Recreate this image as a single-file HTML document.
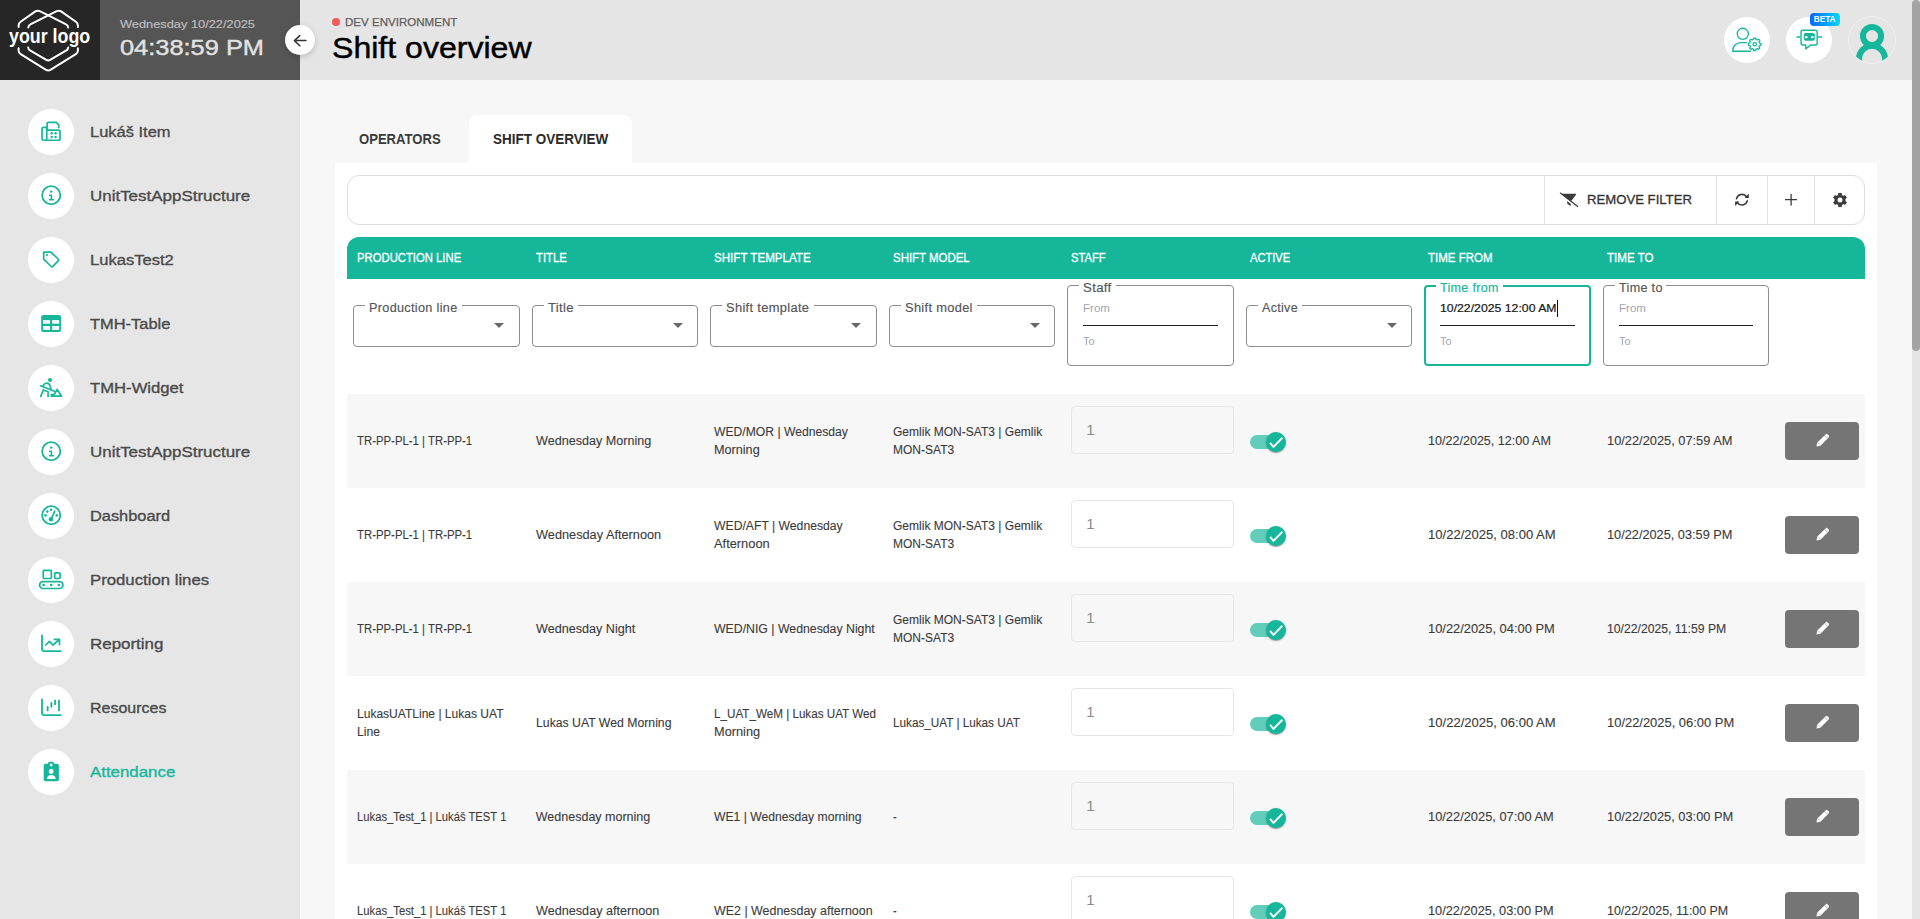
<!DOCTYPE html>
<html lang="en">
<head>
<meta charset="utf-8">
<title>Shift overview</title>
<style>
*{box-sizing:border-box;margin:0;padding:0}
html,body{width:1920px;height:919px;overflow:hidden;background:#f7f7f7;font-family:"Liberation Sans",sans-serif;color:#333}
.abs{position:absolute}
.t{position:absolute;white-space:nowrap;transform-origin:0 50%}
#logo{left:0;top:0;width:100px;height:80px;background:#262626}
#clock{left:100px;top:0;width:200px;height:80px;background:#555}
#topbar{left:300px;top:0;width:1612px;height:80px;background:#e5e5e5}
#side{left:0;top:80px;width:300px;height:839px;background:#e6e6e6}
#sbar{left:1912px;top:0;width:8px;height:919px;background:#e5e5e5}
#sthumb{left:1912px;top:0;width:8px;height:351px;background:#a3a3a3;border-radius:4px}
#collapse{left:285px;top:25px;width:30px;height:30px;border-radius:50%;background:#fff;box-shadow:0 2px 6px rgba(0,0,0,.18)}
.mi{position:absolute;left:28px;width:46px;height:46px;border-radius:50%;background:#fff}
.mi svg{position:absolute;left:11px;top:11px;width:24px;height:24px;overflow:visible}
.hc{position:absolute;top:17px;width:46px;height:46px;border-radius:50%;background:#fff}
#card{left:335px;top:163px;width:1542px;height:760px;background:#fff}
#tab2{left:469px;top:115px;width:163px;height:50px;background:#fff;border-radius:9px 9px 0 0}
#tool{left:347px;top:175px;width:1518px;height:50px;border:1px solid #dedede;border-radius:12px;background:#fff}
.sep{position:absolute;top:176px;width:1px;height:48px;background:#e2e2e2}
#thead{left:347px;top:237px;width:1518px;height:42px;background:#16b69b;border-radius:12px 12px 0 0}
.row{position:absolute;left:347px;width:1518px;height:94px}
.row.g{background:#f7f7f7}
.fb{position:absolute;border:1px solid #8c8c8c;border-radius:4px;background:#fff}
.fb.sel{top:305px;height:42px;width:167px}
.fb.rng{top:285px;height:81px;width:167px}
.fb.foc{border:2px solid #16b69b}
.lg{position:absolute;height:4px;background:#fff}
.ln{position:absolute;top:325px;height:1px;background:#222}
.arr{position:absolute;top:323px;width:0;height:0;border-left:5px solid transparent;border-right:5px solid transparent;border-top:5px solid #686868}
.inp{position:absolute;left:1071px;width:163px;height:48px;border:1px solid #e6e6e6;border-radius:4px;background:#fff}
.inp.d{background:#f7f7f7}
.trk{position:absolute;left:1250px;width:34px;height:14px;border-radius:7px;background:#62cdb9}
.knb{position:absolute;left:1266px;width:20px;height:20px;border-radius:50%;background:#16b69b;box-shadow:0 2px 1px -1px rgba(0,0,0,.2),0 1px 1px rgba(0,0,0,.14),0 1px 3px rgba(0,0,0,.12)}
.knb svg{position:absolute;left:0;top:0;width:20px;height:20px}
.eb{position:absolute;left:1785px;width:74px;height:38px;border-radius:4px;background:#757575}
.eb svg{position:absolute;left:30.6px;top:11.2px;width:14px;height:14px}
</style>
</head>
<body>
<header>
<div id="logo" class="abs"></div>
<div id="clock" class="abs"></div>
<div id="topbar" class="abs"></div>
<svg class="abs" style="left:0;top:0" width="100" height="80" viewBox="0 0 100 80" fill="none" stroke="#fff" stroke-width="2" stroke-linecap="round" stroke-linejoin="round"><path d="M18.6 27V25.6Q18.6 23.2 20.6 21.8L35.4 11.4Q37.6 10 39.8 11.2L65.6 24.2Q68.2 25.5 68.2 27.4"/><path d="M77.9 27V25.6Q77.9 23.2 75.9 21.8L61.1 11.4Q58.9 10 56.7 11.2L30.9 24.2Q28.3 25.5 28.3 27.4"/><path d="M18.6 48.2V50.4Q18.6 52.8 20.7 54.1L46 69.8Q48.2 71.1 50.4 69.8L75.8 54.1Q77.9 52.8 77.9 50.4V48.2"/><path d="M28.2 47.6Q28.4 49.4 30 50.3L46.3 59.9Q48.2 61 50.1 59.9L66.4 50.3Q68 49.4 68.2 47.6"/></svg>
<div class="abs" style="left:332px;top:17.8px;width:8.2px;height:8.2px;border-radius:50%;background:#f35b5b"></div>
<div class="hc" style="left:1724px"><svg width="46" height="46" viewBox="0 0 46 46" fill="none" stroke="#16b69b" stroke-width="1.3" stroke-linecap="round" stroke-linejoin="round" style="position:absolute;left:0;top:0"><circle cx="18.8" cy="16.8" r="5.55"/><path d="M22.6 25.7H16.6C11.6 25.7 8.7 29.6 8.7 34.25H26.6"/><path d="M29.52 22.42L29.74 21.00L31.72 21.00L31.94 22.42L33.31 22.99L34.46 22.13L35.87 23.54L35.01 24.69L35.58 26.06L37.00 26.28L37.00 28.26L35.58 28.48L35.01 29.85L35.87 31.00L34.46 32.41L33.31 31.55L31.94 32.12L31.72 33.54L29.74 33.54L29.52 32.12L28.15 31.55L27.00 32.41L25.59 31.00L26.45 29.85L25.88 28.48L24.46 28.26L24.46 26.28L25.88 26.06L26.45 24.69L25.59 23.54L27.00 22.13L28.15 22.99Z" stroke-width="1.25" fill="#fff"/><circle cx="30.73" cy="27.27" r="1.7" stroke-width="1.2"/></svg></div>
<div class="hc" style="left:1786px"><svg width="46" height="46" viewBox="0 0 46 46" fill="none" stroke="#16b69b" stroke-width="1.4" stroke-linecap="round" stroke-linejoin="round" style="position:absolute;left:0;top:0"><path d="M17 13.2H29.2Q31.15 13.2 31.15 15.2V26.1Q31.15 28.05 29.2 28.05H24.6L19.8 31.9V28.05H17Q15.05 28.05 15.05 26.1V15.2Q15.05 13.2 17 13.2Z"/><path d="M11 20H13.7M32.5 20H35.4" stroke-width="1.6"/><rect x="17.75" y="16.05" width="11.05" height="7.75" rx="1.8" fill="#16b69b" stroke="none"/><rect x="18.9" y="19.05" width="2.65" height="2.1" fill="#fff" stroke="none"/><rect x="25" y="19.05" width="2.65" height="2.1" fill="#fff" stroke="none"/></svg></div>
<div class="abs" style="left:1810px;top:12.6px;width:30.2px;height:13.3px;border-radius:4px;background:linear-gradient(90deg,#0a64ff 0%,#00a6ff 55%,#00d8ff 100%)"></div>
<div class="abs" style="left:1848px;top:16px;width:48px;height:48px;border-radius:50%;border:1px solid #efefef;overflow:hidden"><svg width="48" height="48" viewBox="0 0 48 48" style="position:absolute;left:-1px;top:-1px" fill="none" stroke="#16b69b"><circle cx="24.03" cy="20.1" r="9.06" stroke-width="6.04"/><circle cx="24" cy="42.8" r="13" stroke-width="6"/></svg></div>
<div class="t" style="left:120.3px;top:16.88px;font-size:11.3px;line-height:14px;font-weight:normal;color:#bdbdbd;-webkit-text-stroke:0.2px #bdbdbd;transform:scaleX(1.1331);">Wednesday 10/22/2025</div>
<div class="t" style="left:119.5px;top:35.38px;font-size:22px;line-height:26px;font-weight:normal;color:#e2e2e2;-webkit-text-stroke:0.4px #e2e2e2;transform:scaleX(1.1543);">04:38:59 PM</div>
<div class="t" style="left:345.0px;top:15.02px;font-size:11.5px;line-height:14px;font-weight:normal;color:#606060;-webkit-text-stroke:0.25px #606060;transform:scaleX(1.0042);">DEV ENVIRONMENT</div>
<div class="t" style="left:332.3px;top:29.78px;font-size:29.5px;line-height:35px;font-weight:normal;color:#000;-webkit-text-stroke:0.45px #000;transform:scaleX(1.0869);">Shift overview</div>
<div class="t" style="left:1813.8px;top:14.86px;font-size:8.2px;line-height:10px;font-weight:bold;color:#fff;">BETA</div>
<div class="t" style="left:8.6px;top:24.27px;font-size:20px;line-height:24px;font-weight:bold;color:#fff;transform:scaleX(0.8912);">your logo</div>
</header>
<nav>
<div id="side" class="abs"></div>
<div class="mi" style="top:109px"><svg viewBox="0 0 24 24" fill="none" stroke="#16b69b" stroke-width="1.7" stroke-linecap="round" stroke-linejoin="round"><rect x="3.05" y="7.35" width="4.7" height="12.9" rx="1.5"/><path d="M7.75 10.05H19.3Q21.05 10.05 21.05 11.8V18.5Q21.05 20.25 19.3 20.25H7.75"/><path d="M8.1 9.6V4Q8.1 2.3 9.8 2.3H17.2L19.8 4.9V7.6"/><circle cx="12.7" cy="13.2" r="1.2" fill="#16b69b" stroke="none"/><circle cx="16.6" cy="13.2" r="1.2" fill="#16b69b" stroke="none"/><circle cx="12.7" cy="17" r="1.2" fill="#16b69b" stroke="none"/><circle cx="16.6" cy="17" r="1.2" fill="#16b69b" stroke="none"/></svg></div>
<div class="mi" style="top:173px"><svg viewBox="0 0 24 24" fill="none" stroke="#16b69b" stroke-width="1.7" stroke-linecap="round" stroke-linejoin="round"><circle cx="12.2" cy="11.3" r="9.1" stroke-width="1.8"/><circle cx="12.1" cy="7.6" r="1.2" fill="#16b69b" stroke="none"/><path d="M10 11.3H12.4V15.6M9.9 15.7H14.9" stroke-width="1.6" stroke-linecap="butt"/></svg></div>
<div class="mi" style="top:237px"><svg viewBox="0 0 24 24" fill="none" stroke="#16b69b" stroke-width="1.7" stroke-linecap="round" stroke-linejoin="round"><path d="M4.7 4.1H11.8L19.2 11Q20.1 11.85 19.3 12.7L13.9 18.4Q13.05 19.3 12.15 18.5L4.7 11.2Z"/><circle cx="8" cy="7" r="1.1" fill="#16b69b" stroke="none"/></svg></div>
<div class="mi" style="top:301px"><svg viewBox="0 0 24 24" fill="none" stroke="#16b69b" stroke-width="1.7" stroke-linecap="round" stroke-linejoin="round"><rect x="2.2" y="2.9" width="19.75" height="17.1" rx="1.9" fill="#16b69b" stroke="none"/><rect x="4.06" y="8.1" width="7" height="3.6" fill="#fff" stroke="none"/><rect x="13.1" y="8.1" width="7.1" height="3.6" fill="#fff" stroke="none"/><rect x="4.06" y="14" width="7" height="3.9" fill="#fff" stroke="none"/><rect x="13.1" y="14" width="7.1" height="3.9" fill="#fff" stroke="none"/></svg></div>
<div class="mi" style="top:365px"><svg viewBox="0 0 24 24" fill="none" stroke="#16b69b" stroke-width="1.7" stroke-linecap="round" stroke-linejoin="round"><circle cx="11.05" cy="4" r="2.1" fill="#16b69b" stroke="none"/><path d="M4 10.3C4.6 7 9.6 5.6 10.9 9.6L12 13.3"/><path d="M1.6 9.8L15.4 15.3"/><path d="M1.7 20.4L4.3 14L9.1 15.8V20.4"/><path d="M18.2 13.5L22.6 20.2H12.3V18.5H15.2Z"/></svg></div>
<div class="mi" style="top:429px"><svg viewBox="0 0 24 24" fill="none" stroke="#16b69b" stroke-width="1.7" stroke-linecap="round" stroke-linejoin="round"><circle cx="12.2" cy="11.3" r="9.1" stroke-width="1.8"/><circle cx="12.1" cy="7.6" r="1.2" fill="#16b69b" stroke="none"/><path d="M10 11.3H12.4V15.6M9.9 15.7H14.9" stroke-width="1.6" stroke-linecap="butt"/></svg></div>
<div class="mi" style="top:493px"><svg viewBox="0 0 24 24" fill="none" stroke="#16b69b" stroke-width="1.7" stroke-linecap="round" stroke-linejoin="round"><circle cx="12.2" cy="11.3" r="9.1" stroke-width="1.8"/><circle cx="12" cy="5.8" r="1.3" fill="#16b69b" stroke="none"/><circle cx="8.3" cy="7.6" r="1.3" fill="#16b69b" stroke="none"/><circle cx="6.5" cy="11.35" r="1.3" fill="#16b69b" stroke="none"/><circle cx="17.8" cy="11.35" r="1.3" fill="#16b69b" stroke="none"/><circle cx="12" cy="15.3" r="2.3" fill="#16b69b" stroke="none"/><path d="M12 15.3L15.8 7.2"/></svg></div>
<div class="mi" style="top:557px"><svg viewBox="0 0 24 24" fill="none" stroke="#16b69b" stroke-width="1.7" stroke-linecap="round" stroke-linejoin="round"><rect x="4.25" y="2.4" width="8.1" height="8.1" rx="1"/><rect x="15.7" y="4.8" width="5.4" height="5.7" rx="1"/><rect x="0.6" y="13.7" width="23.3" height="6.8" rx="3.4"/><circle cx="4.7" cy="17.05" r="1.3" fill="#16b69b" stroke="none"/><circle cx="12.16" cy="17.05" r="1.3" fill="#16b69b" stroke="none"/><circle cx="19.86" cy="17.05" r="1.3" fill="#16b69b" stroke="none"/></svg></div>
<div class="mi" style="top:621px"><svg viewBox="0 0 24 24" fill="none" stroke="#16b69b" stroke-width="1.7" stroke-linecap="round" stroke-linejoin="round"><path d="M3 3.3V17Q3 19.05 5.1 19.05H21.8" stroke-width="1.8"/><path d="M6.7 13L10.4 9.4L14 13.2L20.2 7.5M15.4 7.3H20.5V12.6"/></svg></div>
<div class="mi" style="top:685px"><svg viewBox="0 0 24 24" fill="none" stroke="#16b69b" stroke-width="1.7" stroke-linecap="round" stroke-linejoin="round"><path d="M3 3.3V17Q3 19.05 5.1 19.05H21.8" stroke-width="1.8"/><path d="M8.63 10.9V14.4M12.35 7V10.8M16.07 4.4V8.2M20 4.4V14.4" stroke-width="1.8"/></svg></div>
<div class="mi" style="top:749px"><svg viewBox="0 0 24 24" fill="none" stroke="#16b69b" stroke-width="1.7" stroke-linecap="round" stroke-linejoin="round"><rect x="4.7" y="3.85" width="15.2" height="17.3" rx="1.9" fill="#16b69b" stroke="none"/><circle cx="12.16" cy="4.8" r="3.4" fill="#16b69b" stroke="none"/><circle cx="12.16" cy="5" r="1.4" fill="#fff" stroke="none"/><circle cx="12.16" cy="11.5" r="2.45" fill="#fff" stroke="none"/><path d="M7.8 18.9C7.8 13.6 16.7 13.6 16.7 18.9Z" fill="#fff" stroke="none"/></svg></div>
<div class="t" style="left:90.2px;top:122.13px;font-size:15.5px;line-height:19px;font-weight:normal;color:#4a4a4a;-webkit-text-stroke:0.35px #4a4a4a;transform:scaleX(1.0618);">Lukáš Item</div>
<div class="t" style="left:90.2px;top:186.13px;font-size:15.5px;line-height:19px;font-weight:normal;color:#4a4a4a;-webkit-text-stroke:0.35px #4a4a4a;transform:scaleX(1.0937);">UnitTestAppStructure</div>
<div class="t" style="left:90.2px;top:250.13px;font-size:15.5px;line-height:19px;font-weight:normal;color:#4a4a4a;-webkit-text-stroke:0.35px #4a4a4a;transform:scaleX(1.0686);">LukasTest2</div>
<div class="t" style="left:90.2px;top:314.13px;font-size:15.5px;line-height:19px;font-weight:normal;color:#4a4a4a;-webkit-text-stroke:0.35px #4a4a4a;transform:scaleX(1.0607);">TMH-Table</div>
<div class="t" style="left:90.2px;top:378.13px;font-size:15.5px;line-height:19px;font-weight:normal;color:#4a4a4a;-webkit-text-stroke:0.35px #4a4a4a;transform:scaleX(1.0749);">TMH-Widget</div>
<div class="t" style="left:90.2px;top:442.13px;font-size:15.5px;line-height:19px;font-weight:normal;color:#4a4a4a;-webkit-text-stroke:0.35px #4a4a4a;transform:scaleX(1.0937);">UnitTestAppStructure</div>
<div class="t" style="left:90.2px;top:506.13px;font-size:15.5px;line-height:19px;font-weight:normal;color:#4a4a4a;-webkit-text-stroke:0.35px #4a4a4a;transform:scaleX(1.0563);">Dashboard</div>
<div class="t" style="left:90.2px;top:570.13px;font-size:15.5px;line-height:19px;font-weight:normal;color:#4a4a4a;-webkit-text-stroke:0.35px #4a4a4a;transform:scaleX(1.0798);">Production lines</div>
<div class="t" style="left:90.2px;top:634.13px;font-size:15.5px;line-height:19px;font-weight:normal;color:#4a4a4a;-webkit-text-stroke:0.35px #4a4a4a;transform:scaleX(1.0920);">Reporting</div>
<div class="t" style="left:90.2px;top:698.13px;font-size:15.5px;line-height:19px;font-weight:normal;color:#4a4a4a;-webkit-text-stroke:0.35px #4a4a4a;transform:scaleX(1.0311);">Resources</div>
<div class="t" style="left:90.2px;top:762.13px;font-size:15.5px;line-height:19px;font-weight:normal;color:#16b69b;-webkit-text-stroke:0.35px #16b69b;transform:scaleX(1.0875);">Attendance</div>
</nav>
<div id="collapse" class="abs"></div>
<svg class="abs" style="left:285px;top:25px" width="30" height="30" viewBox="0 0 30 30" fill="none" stroke="#333" stroke-width="1.5" stroke-linecap="round" stroke-linejoin="round"><path d="M20.9 15.6H9.4M14.8 10.6L9.4 15.6L14.8 20.7"/></svg>
<main>
<div id="tab2" class="abs"></div>
<div id="card" class="abs"></div>
<div id="tool" class="abs"></div>
<div class="sep" style="left:1544px"></div>
<div class="sep" style="left:1716px"></div>
<div class="sep" style="left:1767px"></div>
<div class="sep" style="left:1814px"></div>
<svg class="abs" style="left:1556px;top:188px" width="24" height="24" viewBox="0 0 24 24"><path d="M5.40 5.70H19.60Q20.60 5.70 20.10 6.60L15.60 12.60L14.40 12.70Z" fill="#3a3a3a"/><path d="M11.20 13.10L14.90 15.90L14.50 18.10L11.30 15.70Z" fill="#3a3a3a"/><path d="M4.40 5.10L21.70 18.40" stroke="#3a3a3a" stroke-width="1.25" stroke-linecap="round"/></svg>
<svg class="abs" style="left:1730px;top:188px" width="24" height="24" viewBox="0 0 24 24" fill="none" stroke="#3a3a3a" stroke-width="1.6" stroke-linecap="round"><path d="M6.5 10.6A5.6 5.6 0 0 1 16.6 8.9"/><path d="M17.3 12.9A5.6 5.6 0 0 1 7.2 14.5"/><path d="M18.8 5.6V10H14.5Z" fill="#3a3a3a" stroke="none"/><path d="M5.1 17.9V13.5H9.4Z" fill="#3a3a3a" stroke="none"/></svg>
<svg class="abs" style="left:1779px;top:188px" width="24" height="24" viewBox="0 0 24 24" fill="none" stroke="#3a3a3a" stroke-width="1.3" stroke-linecap="round"><path d="M6.6 11.7H17.5M12.1 6.3V17.1"/></svg>
<svg class="abs" style="left:1827.95px;top:187.83px" width="24" height="24" viewBox="0 0 24 24"><path d="M10.42 7.15L10.73 5.32L13.27 5.32L13.58 7.15L15.41 8.21L17.15 7.56L18.42 9.76L16.99 10.94L16.99 13.06L18.42 14.24L17.15 16.44L15.41 15.79L13.58 16.85L13.27 18.68L10.73 18.68L10.42 16.85L8.59 15.79L6.85 16.44L5.58 14.24L7.01 13.06L7.01 10.94L5.58 9.76L6.85 7.56L8.59 8.21Z" fill="#3a3a3a" stroke="#3a3a3a" stroke-width="0.8" stroke-linejoin="round"/><circle cx="12" cy="12" r="2.5" fill="#fff"/></svg>
<div id="thead" class="abs"></div>
<div class="fb sel" style="left:353.2px;width:166.4px"></div>
<div class="arr" style="left:494.1px"></div>
<div class="fb sel" style="left:531.7px;width:166.4px"></div>
<div class="arr" style="left:672.6px"></div>
<div class="fb sel" style="left:710.2px;width:166.4px"></div>
<div class="arr" style="left:851.1px"></div>
<div class="fb sel" style="left:888.7px;width:166.4px"></div>
<div class="arr" style="left:1029.6px"></div>
<div class="fb rng" style="left:1067.2px;width:166.4px"></div>
<div class="ln" style="left:1083.2px;width:134.5px"></div>
<div class="fb sel" style="left:1245.7px;width:166.4px"></div>
<div class="arr" style="left:1386.6px"></div>
<div class="fb rng foc" style="left:1424.2px;width:166.4px"></div>
<div class="ln" style="left:1440.2px;width:134.5px"></div>
<div class="fb rng" style="left:1602.7px;width:166.4px"></div>
<div class="ln" style="left:1618.7px;width:134.5px"></div>
<div class="lg" style="left:365.0px;top:304px;width:96.7px"></div>
<div class="lg" style="left:543.5px;top:304px;width:34.0px"></div>
<div class="lg" style="left:722.0px;top:304px;width:91.5px"></div>
<div class="lg" style="left:900.5px;top:304px;width:76.0px"></div>
<div class="lg" style="left:1079.0px;top:284px;width:37.1px"></div>
<div class="lg" style="left:1257.5px;top:304px;width:44.1px"></div>
<div class="lg" style="left:1436.0px;top:284px;width:66.9px"></div>
<div class="lg" style="left:1614.5px;top:284px;width:51.9px"></div>
<div class="abs" style="left:1557.3px;top:300px;width:1px;height:16.5px;background:#111"></div>
<div class="row g" style="top:394px"></div>
<div class="inp d" style="top:406px"></div>
<div class="trk" style="top:435px"></div>
<div class="knb" style="top:431.9px"><svg viewBox="0 0 20 20"><path d="M4.05 10.8L7.5 14.8L16.4 5.75" fill="none" stroke="#fff" stroke-width="1.9"/></svg></div>
<div class="eb" style="top:422px"><svg viewBox="0 0 14 14"><path d="M0.4 13.5L1.3 9.6L9.5 1.4Q10.6 0.3 11.7 1.4L12.6 2.3Q13.7 3.4 12.6 4.5L4.4 12.7Z" fill="#fff"/><path d="M8.6 2.3L11.7 5.4" stroke="#888" stroke-width="0.6"/><path d="M2.2 9.9L4.1 11.8" stroke="#999" stroke-width="0.5"/></svg></div>
<div class="row" style="top:488px"></div>
<div class="inp" style="top:500px"></div>
<div class="trk" style="top:529px"></div>
<div class="knb" style="top:525.9px"><svg viewBox="0 0 20 20"><path d="M4.05 10.8L7.5 14.8L16.4 5.75" fill="none" stroke="#fff" stroke-width="1.9"/></svg></div>
<div class="eb" style="top:516px"><svg viewBox="0 0 14 14"><path d="M0.4 13.5L1.3 9.6L9.5 1.4Q10.6 0.3 11.7 1.4L12.6 2.3Q13.7 3.4 12.6 4.5L4.4 12.7Z" fill="#fff"/><path d="M8.6 2.3L11.7 5.4" stroke="#888" stroke-width="0.6"/><path d="M2.2 9.9L4.1 11.8" stroke="#999" stroke-width="0.5"/></svg></div>
<div class="row g" style="top:582px"></div>
<div class="inp d" style="top:594px"></div>
<div class="trk" style="top:623px"></div>
<div class="knb" style="top:619.9px"><svg viewBox="0 0 20 20"><path d="M4.05 10.8L7.5 14.8L16.4 5.75" fill="none" stroke="#fff" stroke-width="1.9"/></svg></div>
<div class="eb" style="top:610px"><svg viewBox="0 0 14 14"><path d="M0.4 13.5L1.3 9.6L9.5 1.4Q10.6 0.3 11.7 1.4L12.6 2.3Q13.7 3.4 12.6 4.5L4.4 12.7Z" fill="#fff"/><path d="M8.6 2.3L11.7 5.4" stroke="#888" stroke-width="0.6"/><path d="M2.2 9.9L4.1 11.8" stroke="#999" stroke-width="0.5"/></svg></div>
<div class="row" style="top:676px"></div>
<div class="inp" style="top:688px"></div>
<div class="trk" style="top:717px"></div>
<div class="knb" style="top:713.9px"><svg viewBox="0 0 20 20"><path d="M4.05 10.8L7.5 14.8L16.4 5.75" fill="none" stroke="#fff" stroke-width="1.9"/></svg></div>
<div class="eb" style="top:704px"><svg viewBox="0 0 14 14"><path d="M0.4 13.5L1.3 9.6L9.5 1.4Q10.6 0.3 11.7 1.4L12.6 2.3Q13.7 3.4 12.6 4.5L4.4 12.7Z" fill="#fff"/><path d="M8.6 2.3L11.7 5.4" stroke="#888" stroke-width="0.6"/><path d="M2.2 9.9L4.1 11.8" stroke="#999" stroke-width="0.5"/></svg></div>
<div class="row g" style="top:770px"></div>
<div class="inp d" style="top:782px"></div>
<div class="trk" style="top:811px"></div>
<div class="knb" style="top:807.9px"><svg viewBox="0 0 20 20"><path d="M4.05 10.8L7.5 14.8L16.4 5.75" fill="none" stroke="#fff" stroke-width="1.9"/></svg></div>
<div class="eb" style="top:798px"><svg viewBox="0 0 14 14"><path d="M0.4 13.5L1.3 9.6L9.5 1.4Q10.6 0.3 11.7 1.4L12.6 2.3Q13.7 3.4 12.6 4.5L4.4 12.7Z" fill="#fff"/><path d="M8.6 2.3L11.7 5.4" stroke="#888" stroke-width="0.6"/><path d="M2.2 9.9L4.1 11.8" stroke="#999" stroke-width="0.5"/></svg></div>
<div class="row" style="top:864px"></div>
<div class="inp" style="top:876px"></div>
<div class="trk" style="top:905px"></div>
<div class="knb" style="top:901.9px"><svg viewBox="0 0 20 20"><path d="M4.05 10.8L7.5 14.8L16.4 5.75" fill="none" stroke="#fff" stroke-width="1.9"/></svg></div>
<div class="eb" style="top:892px"><svg viewBox="0 0 14 14"><path d="M0.4 13.5L1.3 9.6L9.5 1.4Q10.6 0.3 11.7 1.4L12.6 2.3Q13.7 3.4 12.6 4.5L4.4 12.7Z" fill="#fff"/><path d="M8.6 2.3L11.7 5.4" stroke="#888" stroke-width="0.6"/><path d="M2.2 9.9L4.1 11.8" stroke="#999" stroke-width="0.5"/></svg></div>
<div class="t" style="left:359.2px;top:129.13px;font-size:15.5px;line-height:19px;font-weight:bold;color:#3a3a3a;transform:scaleX(0.8434);">OPERATORS</div>
<div class="t" style="left:493.0px;top:129.13px;font-size:15.5px;line-height:19px;font-weight:bold;color:#2a2a2a;transform:scaleX(0.8705);">SHIFT OVERVIEW</div>
<div class="t" style="left:1586.5px;top:192.29px;font-size:13.3px;line-height:16px;font-weight:normal;color:#333;-webkit-text-stroke:0.3px #333;transform:scaleX(0.9882);">REMOVE FILTER</div>
<div class="t" style="left:357.3px;top:251.17px;font-size:12.5px;line-height:15px;font-weight:normal;color:#fff;-webkit-text-stroke:0.3px #fff;transform:scaleX(0.9038);">PRODUCTION LINE</div>
<div class="t" style="left:535.8px;top:251.17px;font-size:12.5px;line-height:15px;font-weight:normal;color:#fff;-webkit-text-stroke:0.3px #fff;transform:scaleX(0.9046);">TITLE</div>
<div class="t" style="left:714.3px;top:251.17px;font-size:12.5px;line-height:15px;font-weight:normal;color:#fff;-webkit-text-stroke:0.3px #fff;transform:scaleX(0.9281);">SHIFT TEMPLATE</div>
<div class="t" style="left:892.8px;top:251.17px;font-size:12.5px;line-height:15px;font-weight:normal;color:#fff;-webkit-text-stroke:0.3px #fff;transform:scaleX(0.9151);">SHIFT MODEL</div>
<div class="t" style="left:1071.3px;top:251.17px;font-size:12.5px;line-height:15px;font-weight:normal;color:#fff;-webkit-text-stroke:0.3px #fff;transform:scaleX(0.8977);">STAFF</div>
<div class="t" style="left:1249.8px;top:251.17px;font-size:12.5px;line-height:15px;font-weight:normal;color:#fff;-webkit-text-stroke:0.3px #fff;transform:scaleX(0.8902);">ACTIVE</div>
<div class="t" style="left:1428.3px;top:251.17px;font-size:12.5px;line-height:15px;font-weight:normal;color:#fff;-webkit-text-stroke:0.3px #fff;transform:scaleX(0.9224);">TIME FROM</div>
<div class="t" style="left:1606.8px;top:251.17px;font-size:12.5px;line-height:15px;font-weight:normal;color:#fff;-webkit-text-stroke:0.3px #fff;transform:scaleX(0.9254);">TIME TO</div>
<div class="t" style="left:369.2px;top:300.94px;font-size:12px;line-height:14px;font-weight:normal;color:#555;-webkit-text-stroke:0.15px #555;transform:scaleX(1.0549);letter-spacing:0.3px;">Production line</div>
<div class="t" style="left:547.7px;top:300.94px;font-size:12px;line-height:14px;font-weight:normal;color:#555;-webkit-text-stroke:0.15px #555;transform:scaleX(1.0870);letter-spacing:0.3px;">Title</div>
<div class="t" style="left:726.2px;top:300.94px;font-size:12px;line-height:14px;font-weight:normal;color:#555;-webkit-text-stroke:0.15px #555;transform:scaleX(1.0738);letter-spacing:0.3px;">Shift template</div>
<div class="t" style="left:904.7px;top:300.94px;font-size:12px;line-height:14px;font-weight:normal;color:#555;-webkit-text-stroke:0.15px #555;transform:scaleX(1.0704);letter-spacing:0.3px;">Shift model</div>
<div class="t" style="left:1083.2px;top:280.74px;font-size:12px;line-height:14px;font-weight:normal;color:#555;-webkit-text-stroke:0.15px #555;transform:scaleX(1.1013);letter-spacing:0.3px;">Staff</div>
<div class="t" style="left:1261.7px;top:300.94px;font-size:12px;line-height:14px;font-weight:normal;color:#555;-webkit-text-stroke:0.15px #555;transform:scaleX(1.0411);letter-spacing:0.3px;">Active</div>
<div class="t" style="left:1440.2px;top:280.74px;font-size:12px;line-height:14px;font-weight:normal;color:#16b69b;-webkit-text-stroke:0.15px #16b69b;transform:scaleX(1.0433);letter-spacing:0.3px;">Time from</div>
<div class="t" style="left:1618.7px;top:280.74px;font-size:12px;line-height:14px;font-weight:normal;color:#555;-webkit-text-stroke:0.15px #555;transform:scaleX(1.0487);letter-spacing:0.3px;">Time to</div>
<div class="t" style="left:1083.2px;top:301.69px;font-size:11px;line-height:13px;font-weight:normal;color:#a0a6b0;transform:scaleX(1.0517);">From</div>
<div class="t" style="left:1083.2px;top:334.69px;font-size:11px;line-height:13px;font-weight:normal;color:#a0a6b0;transform:scaleX(0.9892);">To</div>
<div class="t" style="left:1440.2px;top:334.69px;font-size:11px;line-height:13px;font-weight:normal;color:#a0a6b0;transform:scaleX(0.9892);">To</div>
<div class="t" style="left:1618.7px;top:301.69px;font-size:11px;line-height:13px;font-weight:normal;color:#a0a6b0;transform:scaleX(1.0517);">From</div>
<div class="t" style="left:1618.7px;top:334.69px;font-size:11px;line-height:13px;font-weight:normal;color:#a0a6b0;transform:scaleX(0.9892);">To</div>
<div class="t" style="left:1440.2px;top:301.35px;font-size:11.4px;line-height:14px;font-weight:normal;color:#161616;-webkit-text-stroke:0.2px #161616;transform:scaleX(1.0765);">10/22/2025 12:00 AM</div>
<div class="t" style="left:357.3px;top:433.57px;font-size:12.5px;line-height:15px;font-weight:normal;color:#3a3a3a;-webkit-text-stroke:0.1px #3a3a3a;transform:scaleX(0.9095);">TR-PP-PL-1 | TR-PP-1</div>
<div class="t" style="left:535.8px;top:433.57px;font-size:12.5px;line-height:15px;font-weight:normal;color:#3a3a3a;-webkit-text-stroke:0.1px #3a3a3a;transform:scaleX(1.0068);">Wednesday Morning</div>
<div class="t" style="left:714.3px;top:424.57px;font-size:12.5px;line-height:15px;font-weight:normal;color:#3a3a3a;-webkit-text-stroke:0.1px #3a3a3a;transform:scaleX(0.9711);">WED/MOR | Wednesday</div>
<div class="t" style="left:714.3px;top:442.57px;font-size:12.5px;line-height:15px;font-weight:normal;color:#3a3a3a;-webkit-text-stroke:0.1px #3a3a3a;transform:scaleX(1.0117);">Morning</div>
<div class="t" style="left:892.8px;top:424.57px;font-size:12.5px;line-height:15px;font-weight:normal;color:#3a3a3a;-webkit-text-stroke:0.1px #3a3a3a;transform:scaleX(0.9619);">Gemlik MON-SAT3 | Gemlik</div>
<div class="t" style="left:892.8px;top:442.57px;font-size:12.5px;line-height:15px;font-weight:normal;color:#3a3a3a;-webkit-text-stroke:0.1px #3a3a3a;transform:scaleX(0.9612);">MON-SAT3</div>
<div class="t" style="left:1428.3px;top:433.57px;font-size:12.5px;line-height:15px;font-weight:normal;color:#3a3a3a;-webkit-text-stroke:0.1px #3a3a3a;transform:scaleX(1.0047);">10/22/2025, 12:00 AM</div>
<div class="t" style="left:1606.8px;top:433.57px;font-size:12.5px;line-height:15px;font-weight:normal;color:#3a3a3a;-webkit-text-stroke:0.1px #3a3a3a;transform:scaleX(1.0251);">10/22/2025, 07:59 AM</div>
<div class="t" style="left:1086.2px;top:420.60px;font-size:15px;line-height:18px;font-weight:normal;color:#8a8a8a;">1</div>
<div class="t" style="left:357.3px;top:527.57px;font-size:12.5px;line-height:15px;font-weight:normal;color:#3a3a3a;-webkit-text-stroke:0.1px #3a3a3a;transform:scaleX(0.9095);">TR-PP-PL-1 | TR-PP-1</div>
<div class="t" style="left:535.8px;top:527.57px;font-size:12.5px;line-height:15px;font-weight:normal;color:#3a3a3a;-webkit-text-stroke:0.1px #3a3a3a;transform:scaleX(1.0197);">Wednesday Afternoon</div>
<div class="t" style="left:714.3px;top:518.57px;font-size:12.5px;line-height:15px;font-weight:normal;color:#3a3a3a;-webkit-text-stroke:0.1px #3a3a3a;transform:scaleX(0.9750);">WED/AFT | Wednesday</div>
<div class="t" style="left:714.3px;top:536.57px;font-size:12.5px;line-height:15px;font-weight:normal;color:#3a3a3a;-webkit-text-stroke:0.1px #3a3a3a;transform:scaleX(1.0273);">Afternoon</div>
<div class="t" style="left:892.8px;top:518.57px;font-size:12.5px;line-height:15px;font-weight:normal;color:#3a3a3a;-webkit-text-stroke:0.1px #3a3a3a;transform:scaleX(0.9619);">Gemlik MON-SAT3 | Gemlik</div>
<div class="t" style="left:892.8px;top:536.57px;font-size:12.5px;line-height:15px;font-weight:normal;color:#3a3a3a;-webkit-text-stroke:0.1px #3a3a3a;transform:scaleX(0.9612);">MON-SAT3</div>
<div class="t" style="left:1428.3px;top:527.57px;font-size:12.5px;line-height:15px;font-weight:normal;color:#3a3a3a;-webkit-text-stroke:0.1px #3a3a3a;transform:scaleX(1.0439);">10/22/2025, 08:00 AM</div>
<div class="t" style="left:1606.8px;top:527.57px;font-size:12.5px;line-height:15px;font-weight:normal;color:#3a3a3a;-webkit-text-stroke:0.1px #3a3a3a;transform:scaleX(1.0194);">10/22/2025, 03:59 PM</div>
<div class="t" style="left:1086.2px;top:514.60px;font-size:15px;line-height:18px;font-weight:normal;color:#8a8a8a;">1</div>
<div class="t" style="left:357.3px;top:621.57px;font-size:12.5px;line-height:15px;font-weight:normal;color:#3a3a3a;-webkit-text-stroke:0.1px #3a3a3a;transform:scaleX(0.9095);">TR-PP-PL-1 | TR-PP-1</div>
<div class="t" style="left:535.8px;top:621.57px;font-size:12.5px;line-height:15px;font-weight:normal;color:#3a3a3a;-webkit-text-stroke:0.1px #3a3a3a;transform:scaleX(1.0077);">Wednesday Night</div>
<div class="t" style="left:714.3px;top:621.57px;font-size:12.5px;line-height:15px;font-weight:normal;color:#3a3a3a;-webkit-text-stroke:0.1px #3a3a3a;transform:scaleX(0.9829);">WED/NIG | Wednesday Night</div>
<div class="t" style="left:892.8px;top:612.57px;font-size:12.5px;line-height:15px;font-weight:normal;color:#3a3a3a;-webkit-text-stroke:0.1px #3a3a3a;transform:scaleX(0.9619);">Gemlik MON-SAT3 | Gemlik</div>
<div class="t" style="left:892.8px;top:630.57px;font-size:12.5px;line-height:15px;font-weight:normal;color:#3a3a3a;-webkit-text-stroke:0.1px #3a3a3a;transform:scaleX(0.9612);">MON-SAT3</div>
<div class="t" style="left:1428.3px;top:621.57px;font-size:12.5px;line-height:15px;font-weight:normal;color:#3a3a3a;-webkit-text-stroke:0.1px #3a3a3a;transform:scaleX(1.0300);">10/22/2025, 04:00 PM</div>
<div class="t" style="left:1606.8px;top:621.57px;font-size:12.5px;line-height:15px;font-weight:normal;color:#3a3a3a;-webkit-text-stroke:0.1px #3a3a3a;transform:scaleX(0.9763);">10/22/2025, 11:59 PM</div>
<div class="t" style="left:1086.2px;top:608.60px;font-size:15px;line-height:18px;font-weight:normal;color:#8a8a8a;">1</div>
<div class="t" style="left:357.3px;top:706.57px;font-size:12.5px;line-height:15px;font-weight:normal;color:#3a3a3a;-webkit-text-stroke:0.1px #3a3a3a;transform:scaleX(0.9628);">LukasUATLine | Lukas UAT</div>
<div class="t" style="left:357.3px;top:724.57px;font-size:12.5px;line-height:15px;font-weight:normal;color:#3a3a3a;-webkit-text-stroke:0.1px #3a3a3a;transform:scaleX(0.9771);">Line</div>
<div class="t" style="left:535.8px;top:715.57px;font-size:12.5px;line-height:15px;font-weight:normal;color:#3a3a3a;-webkit-text-stroke:0.1px #3a3a3a;transform:scaleX(0.9800);">Lukas UAT Wed Morning</div>
<div class="t" style="left:714.3px;top:706.57px;font-size:12.5px;line-height:15px;font-weight:normal;color:#3a3a3a;-webkit-text-stroke:0.1px #3a3a3a;transform:scaleX(0.9327);">L_UAT_WeM | Lukas UAT Wed</div>
<div class="t" style="left:714.3px;top:724.57px;font-size:12.5px;line-height:15px;font-weight:normal;color:#3a3a3a;-webkit-text-stroke:0.1px #3a3a3a;transform:scaleX(1.0205);">Morning</div>
<div class="t" style="left:892.8px;top:715.57px;font-size:12.5px;line-height:15px;font-weight:normal;color:#3a3a3a;-webkit-text-stroke:0.1px #3a3a3a;transform:scaleX(0.9375);">Lukas_UAT | Lukas UAT</div>
<div class="t" style="left:1428.3px;top:715.57px;font-size:12.5px;line-height:15px;font-weight:normal;color:#3a3a3a;-webkit-text-stroke:0.1px #3a3a3a;transform:scaleX(1.0439);">10/22/2025, 06:00 AM</div>
<div class="t" style="left:1606.8px;top:715.57px;font-size:12.5px;line-height:15px;font-weight:normal;color:#3a3a3a;-webkit-text-stroke:0.1px #3a3a3a;transform:scaleX(1.0340);">10/22/2025, 06:00 PM</div>
<div class="t" style="left:1086.2px;top:702.60px;font-size:15px;line-height:18px;font-weight:normal;color:#8a8a8a;">1</div>
<div class="t" style="left:357.3px;top:809.57px;font-size:12.5px;line-height:15px;font-weight:normal;color:#3a3a3a;-webkit-text-stroke:0.1px #3a3a3a;transform:scaleX(0.8996);">Lukas_Test_1 | Lukáš TEST 1</div>
<div class="t" style="left:535.8px;top:809.57px;font-size:12.5px;line-height:15px;font-weight:normal;color:#3a3a3a;-webkit-text-stroke:0.1px #3a3a3a;">Wednesday morning</div>
<div class="t" style="left:714.3px;top:809.57px;font-size:12.5px;line-height:15px;font-weight:normal;color:#3a3a3a;-webkit-text-stroke:0.1px #3a3a3a;transform:scaleX(0.9716);">WE1 | Wednesday morning</div>
<div class="t" style="left:892.8px;top:809.57px;font-size:12.5px;line-height:15px;font-weight:normal;color:#3a3a3a;-webkit-text-stroke:0.1px #3a3a3a;transform:scaleX(0.8869);">-</div>
<div class="t" style="left:1428.3px;top:809.57px;font-size:12.5px;line-height:15px;font-weight:normal;color:#3a3a3a;-webkit-text-stroke:0.1px #3a3a3a;transform:scaleX(1.0276);">10/22/2025, 07:00 AM</div>
<div class="t" style="left:1606.8px;top:809.57px;font-size:12.5px;line-height:15px;font-weight:normal;color:#3a3a3a;-webkit-text-stroke:0.1px #3a3a3a;transform:scaleX(1.0259);">10/22/2025, 03:00 PM</div>
<div class="t" style="left:1086.2px;top:796.60px;font-size:15px;line-height:18px;font-weight:normal;color:#8a8a8a;">1</div>
<div class="t" style="left:357.3px;top:903.57px;font-size:12.5px;line-height:15px;font-weight:normal;color:#3a3a3a;-webkit-text-stroke:0.1px #3a3a3a;transform:scaleX(0.8996);">Lukas_Test_1 | Lukáš TEST 1</div>
<div class="t" style="left:535.8px;top:903.57px;font-size:12.5px;line-height:15px;font-weight:normal;color:#3a3a3a;-webkit-text-stroke:0.1px #3a3a3a;transform:scaleX(1.0108);">Wednesday afternoon</div>
<div class="t" style="left:714.3px;top:903.57px;font-size:12.5px;line-height:15px;font-weight:normal;color:#3a3a3a;-webkit-text-stroke:0.1px #3a3a3a;transform:scaleX(0.9952);">WE2 | Wednesday afternoon</div>
<div class="t" style="left:892.8px;top:903.57px;font-size:12.5px;line-height:15px;font-weight:normal;color:#3a3a3a;-webkit-text-stroke:0.1px #3a3a3a;transform:scaleX(0.8869);">-</div>
<div class="t" style="left:1428.3px;top:903.57px;font-size:12.5px;line-height:15px;font-weight:normal;color:#3a3a3a;-webkit-text-stroke:0.1px #3a3a3a;transform:scaleX(1.0218);">10/22/2025, 03:00 PM</div>
<div class="t" style="left:1606.8px;top:903.57px;font-size:12.5px;line-height:15px;font-weight:normal;color:#3a3a3a;-webkit-text-stroke:0.1px #3a3a3a;transform:scaleX(0.9927);">10/22/2025, 11:00 PM</div>
<div class="t" style="left:1086.2px;top:890.60px;font-size:15px;line-height:18px;font-weight:normal;color:#8a8a8a;">1</div>
</main>
<div id="sbar" class="abs"></div>
<div id="sthumb" class="abs"></div>
</body>
</html>
